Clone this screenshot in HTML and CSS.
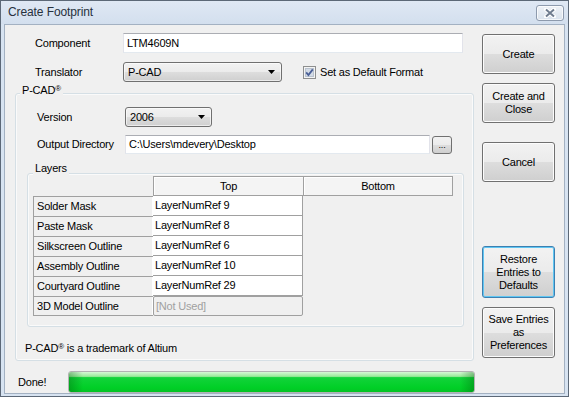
FILE: index.html
```html
<!DOCTYPE html>
<html lang="en">
<head>
  <meta charset="UTF-8" />
  <title>Create Footprint</title>
  <link rel="stylesheet" href="styles.css">
</head>
<body>

  <div class="window">
    <div class="titlebar">
      <span class="title">Create Footprint</span>
      <button class="close-btn" type="button">
        <svg width="12" height="10" viewBox="0 0 12 10">
          <path d="M2 1.5 L10 8.5 M10 1.5 L2 8.5" stroke="#fff" stroke-width="4" stroke-linecap="round"/>
          <path d="M2 1.5 L10 8.5 M10 1.5 L2 8.5" stroke="#6f7c8e" stroke-width="2"/>
        </svg>
      </button>
    </div>

    <div class="client">
      <div class="main">
        <div class="form-row row-component">
          <span class="label">Component</span>
          <div class="textbox textbox-component">LTM4609N</div>
        </div>

        <div class="form-row row-translator">
          <span class="label">Translator</span>
          <div class="combo combo-translator">
            <span>P-CAD</span>
            <svg width="7" height="4" viewBox="0 0 7 4"><path d="M0 0h7L3.5 4z" fill="#000"/></svg>
          </div>
          <label class="check">
            <svg class="checkbox" width="13" height="13" viewBox="0 0 13 13">
              <rect x="0.5" y="0.5" width="12" height="12" fill="#f4f4f4" stroke="#8e8f8f"/>
              <rect x="2.5" y="2.5" width="8" height="8" fill="#d3dbe6" stroke="#b9c2ce"/>
              <path d="M3.2 6.4 L5.4 9 L9.8 3.4" fill="none" stroke="#4a5f97" stroke-width="1.8"/>
            </svg>
            Set as Default Format
          </label>
        </div>

        <div class="group group-pcad">
          <div class="group-title title-pcad">P-CAD<span class="reg">®</span></div>

          <div class="form-row row-version">
            <span class="label">Version</span>
            <div class="combo combo-version">
              <span>2006</span>
              <svg width="7" height="4" viewBox="0 0 7 4"><path d="M0 0h7L3.5 4z" fill="#000"/></svg>
            </div>
          </div>

          <div class="form-row row-output">
            <span class="label">Output Directory</span>
            <div class="output-field">
              <div class="textbox textbox-output">C:\Users\mdevery\Desktop</div>
              <button class="browse-btn" type="button">...</button>
            </div>
          </div>

          <div class="group group-layers">
            <div class="group-title title-layers">Layers</div>

            <div class="layer-grid">
              <div class="cell-blank"></div>
              <div class="col-head">Top</div>
              <div class="col-head col-head-last">Bottom</div>

              <div class="row-head">Solder Mask</div>
              <div class="value">LayerNumRef 9</div>
              <div class="cell-blank"></div>

              <div class="row-head">Paste Mask</div>
              <div class="value">LayerNumRef 8</div>
              <div class="cell-blank"></div>

              <div class="row-head">Silkscreen Outline</div>
              <div class="value">LayerNumRef 6</div>
              <div class="cell-blank"></div>

              <div class="row-head">Assembly Outline</div>
              <div class="value">LayerNumRef 10</div>
              <div class="cell-blank"></div>

              <div class="row-head">Courtyard Outline</div>
              <div class="value">LayerNumRef 29</div>
              <div class="cell-blank"></div>

              <div class="row-head row-head-last">3D Model Outline</div>
              <div class="value value-disabled">[Not Used]</div>
              <div class="cell-blank"></div>
            </div>
          </div>

          <p class="note">P-CAD<span class="reg">®</span> is a trademark of Altium</p>
        </div>

        <div class="status">
          <span class="status-text">Done!</span>
          <div class="progress"><div class="progress-fill"></div></div>
        </div>
      </div>

      <div class="side">
        <button class="btn btn-create" type="button">Create</button>
        <button class="btn btn-close" type="button">Create and<br>Close</button>
        <button class="btn btn-cancel" type="button">Cancel</button>
        <button class="btn btn-restore" type="button">Restore<br>Entries to<br>Defaults</button>
        <button class="btn btn-save" type="button">Save Entries<br>as<br>Preferences</button>
      </div>
    </div>
  </div>

</body>
</html>
```

FILE: styles.css
```css
* {
  box-sizing: border-box;
}

body {
  margin: 0;
  font-family: 'Liberation Sans', Arial, sans-serif;
  font-size: 11px;
  letter-spacing: -0.2px;
  color: #000;
  background: #fff;
}

button {
  font: inherit;
  letter-spacing: inherit;
  color: #000;
  padding: 0;
  margin: 0;
}

.window {
  width: 569px;
  height: 397px;
  border: 1px solid #5c6877;
  background: #d7e3f1;
  display: flex;
  flex-direction: column;
}

/* title bar */
.titlebar {
  height: 23px;
  display: flex;
  justify-content: space-between;
  padding: 0 4px 0 7px;
  background: linear-gradient(#dfe8f4, #d3dfee);
}

.title {
  font-size: 12px;
  letter-spacing: -0.1px;
  line-height: 23px;
  color: #27313d;
}

.close-btn {
  width: 28px;
  height: 16px;
  margin-top: 4px;
  border: 1px solid #8d9aad;
  border-radius: 3px;
  background: linear-gradient(#eef2f7, #d9e2ec);
  box-shadow: inset 0 0 0 1px rgba(255, 255, 255, 0.7);
  display: flex;
  align-items: center;
  justify-content: center;
}

/* client area */
.client {
  flex: 1;
  margin: 0 3px 3px;
  border: 1px solid #a3b1c2;
  background: #f0f0f0;
  display: flex;
}

.main {
  width: 470px;
  padding-left: 10px;
}

.form-row {
  display: grid;
  grid-template-columns: 88px auto 1fr;
  align-items: center;
  padding-left: 20px;
}

.label {
  line-height: 13px;
}

.row-component {
  margin-top: 8px;
}

.row-translator {
  margin-top: 9px;
}

.textbox {
  height: 20px;
  background: #fff;
  border: 1px solid #abadb3;
  border-color: #abadb3 #e2e3ea #e3e9ef #e2e3ea;
  padding: 0 3px;
  line-height: 18px;
  white-space: nowrap;
}

.textbox-component {
  width: 340px;
}

.combo {
  height: 20px;
  border: 1px solid #707070;
  border-radius: 3px;
  background: linear-gradient(#f2f2f2 0%, #ebebeb 50%, #dddddd 51%, #cfcfcf 100%);
  box-shadow: inset 0 0 0 1px rgba(255, 255, 255, 0.6);
  display: flex;
  align-items: center;
  justify-content: space-between;
  padding: 0 6px 0 4px;
}

.combo-translator {
  width: 159px;
}

.combo-version {
  width: 87px;
}

.check {
  display: flex;
  align-items: center;
  gap: 4px;
  margin-left: 21px;
}

.checkbox {
  display: block;
}

/* group boxes */
.group {
  border: 1px solid #d5dfe5;
  border-radius: 3px;
  box-shadow: inset 0 0 0 1px #fafafa;
}

.group-title {
  width: fit-content;
  padding: 0 2px;
  line-height: 13px;
  background: #f0f0f0;
}

.group-pcad {
  width: 459px;
  margin-top: 11px;
  padding: 0 0 5px 11px;
}

.title-pcad {
  margin: -12px 0 0 -7px;
}

.reg {
  font-size: 8px;
  vertical-align: 3px;
}

.row-version {
  margin-top: 10px;
  padding-left: 10px;
}

.row-output {
  margin-top: 8px;
  padding-left: 10px;
}

.output-field {
  display: flex;
  align-items: center;
  gap: 2px;
}

.textbox-output {
  width: 305px;
  height: 19px;
  line-height: 17px;
}

.browse-btn {
  width: 20px;
  height: 18px;
  border: 1px solid #707070;
  border-radius: 3px;
  background: linear-gradient(#f2f2f2 0%, #ebebeb 50%, #dddddd 51%, #cfcfcf 100%);
  font-size: 9px;
  line-height: 12px;
}

.group-layers {
  width: 437px;
  margin-top: 19px;
  padding: 0 0 10px 5px;
}

.title-layers {
  margin: -12px 0 0 0;
}

/* layer table */
.layer-grid {
  margin-top: 1px;
  display: grid;
  grid-template-columns: 120px 150px 150px;
  grid-auto-rows: 20px;
}

.col-head {
  border: 1px solid #a0a0a0;
  border-right: none;
  background: #f4f4f4;
  box-shadow: inset 1px 1px 0 #fff;
  text-align: center;
  line-height: 18px;
}

.col-head-last {
  border-right: 1px solid #a0a0a0;
}

.row-head {
  border-top: 1px solid #a0a0a0;
  border-left: 1px solid #a0a0a0;
  background: #f0f0f0;
  box-shadow: inset -1px 0 0 #fff;
  padding-left: 3px;
  line-height: 18px;
}

.row-head:first-of-type {
  border-top: none;
}

.row-head-last {
  border-bottom: 1px solid #a0a0a0;
}

.value {
  border-bottom: 1px solid #a0a0a0;
  border-right: 1px solid #a0a0a0;
  background: #fff;
  padding-left: 2px;
  line-height: 19px;
}

.value-disabled {
  border: 1px solid #a0a0a0;
  border-radius: 2px;
  background: #f0f0f0;
  color: #a0a0a0;
  line-height: 18px;
}

.note {
  margin: 13px 0 0 -2px;
  line-height: 13px;
}

/* status */
.status {
  margin-top: 10px;
  padding-left: 3px;
  display: grid;
  grid-template-columns: 50px 1fr;
  align-items: center;
}

.progress {
  height: 22px;
  border: 1px solid #b2b2b2;
  border-radius: 3px;
  background: #e6e6e6;
  overflow: hidden;
}

.progress-fill {
  width: 100%;
  height: 100%;
  background:
    linear-gradient(to right, rgba(0, 90, 10, 0.35), rgba(0, 90, 10, 0) 14px, rgba(0, 90, 10, 0) calc(100% - 14px), rgba(0, 90, 10, 0.35)),
    linear-gradient(#d6f8d6 0%, #9aea9a 22%, #12d33a 28%, #00cf26 80%, #05c226 100%);
}

/* buttons column */
.side {
  width: 73px;
  margin-left: 7px;
  display: flex;
  flex-direction: column;
}

.btn {
  width: 73px;
  border: 1px solid #707070;
  border-radius: 3px;
  background: linear-gradient(#f2f2f2 0%, #ebebeb 50%, #dddddd 51%, #cfcfcf 100%);
  box-shadow: inset 0 0 0 1px #fcfcfc;
  line-height: 13px;
  text-align: center;
}

.btn-create {
  height: 40px;
  margin-top: 9px;
}

.btn-close {
  height: 40px;
  margin-top: 9px;
}

.btn-cancel {
  height: 40px;
  margin-top: 19px;
}

.btn-restore {
  height: 52px;
  margin-top: 64px;
  border-color: #3c7fb1;
  box-shadow: inset 0 0 0 1px #5fc6f2;
}

.btn-save {
  height: 51px;
  margin-top: 9px;
}
```
